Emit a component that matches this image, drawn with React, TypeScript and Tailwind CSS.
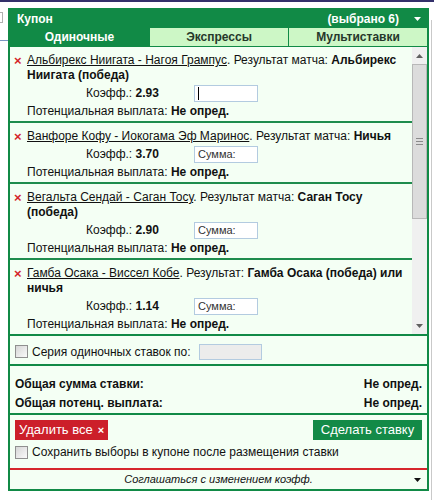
import React from 'react';

interface Selection {
  id: number;
  match: string;
  label: string;
  outcome: string;
  odds: string;
  focused?: boolean;
}

const selections: Selection[] = [
  { id: 1, match: 'Альбирекс Ниигата - Нагоя Грампус', label: 'Результат матча:', outcome: 'Альбирекс Ниигата (победа)', odds: '2.93', focused: true },
  { id: 2, match: 'Ванфоре Кофу - Иокогама Эф Маринос', label: 'Результат матча:', outcome: 'Ничья', odds: '3.70' },
  { id: 3, match: 'Вегальта Сендай - Саган Тосу', label: 'Результат матча:', outcome: 'Саган Тосу (победа)', odds: '2.90' },
  { id: 4, match: 'Гамба Осака - Виссел Кобе', label: 'Результат:', outcome: 'Гамба Осака (победа) или ничья', odds: '1.14' },
];

const Checkbox = () => (
  <span className="block h-[13px] w-[13px] shrink-0 border border-[#8f8f8f] bg-gradient-to-br from-[#d6d6d6] to-[#fafafa]" />
);

const Arrow = ({ up, color }: { up?: boolean; color: string }) => (
  <svg width="7" height="4" viewBox="0 0 7 4">
    <path d={up ? 'M0 4 L3.5 0 L7 4 Z' : 'M0 0 L7 0 L3.5 4 Z'} fill={color} />
  </svg>
);

export default function App() {
  return (
    <div className="relative h-[500px] w-[434px] overflow-hidden bg-white font-['Liberation_Sans',Arial,sans-serif] text-[12px] text-[#111]">
      {/* page fragments around the coupon */}
      <div className="absolute left-0 top-0 h-[2px] w-full bg-[#33306a]" />
      <div className="absolute left-[-10px] top-[12px] h-[11px] w-[13px] border border-[#b0b0b0]" />
      <div className="absolute left-0 top-[40px] h-[1px] w-[8px] bg-[#7b95c2]" />
      <div className="absolute right-[2px] top-[20px] h-[480px] w-[1px] bg-[#c9c9c9]" />

      <div className="ml-[8px] mt-[8px] w-[421px] border-2 border-[#118a46] bg-[#f4fff4]">
        {/* Header */}
        <div className="flex h-[17px] items-center bg-[#118a46] pl-[7px] pr-[6px] font-bold text-white">
          <span className="flex-1">Купон</span>
          <span>(выбрано 6)</span>
          <span className="ml-[15px] flex items-center">
            <Arrow color="#ffffff" />
          </span>
        </div>

        {/* Tabs */}
        <div className="flex gap-[1px] bg-[#118a46] pb-[1px] pt-[1px] font-bold">
          <div className="flex h-[18px] w-[139px] items-center justify-center text-white">Одиночные</div>
          <div className="flex h-[18px] w-[138px] items-center justify-center bg-[#cdf7c6] text-[#26382b]">Экспрессы</div>
          <div className="flex h-[18px] flex-1 items-center justify-center bg-[#cdf7c6] text-[#26382b]">Мультиставки</div>
        </div>

        {/* Selections list */}
        <div className="flex h-[289px] border-b-2 border-[#118a46]">
          <div className="flex-1 overflow-hidden">
            {selections.map((s) => (
              <div key={s.id} className="flex border-b-2 border-[#1e8c4d] pb-[3px] pl-[4px] pr-[4px] pt-[6px]">
                <span className="w-[13px] shrink-0 text-[13px] font-bold leading-[15px] text-[#d4252b]">×</span>
                <div className="flex-1">
                  <div className="leading-[15px]">
                    <span className="underline">{s.match}</span>. {s.label}{' '}
                    {s.outcome.split(' ').map((word, i) => (
                      <React.Fragment key={i}>
                        {i > 0 && ' '}
                        <b>{word}</b>
                      </React.Fragment>
                    ))}
                  </div>
                  <div className="mt-[1px] flex h-[18px] items-center">
                    <span className="w-[167px] pl-[59px]">
                      Коэфф.: <b>{s.odds}</b>
                    </span>
                    <div className="flex h-[17px] w-[64px] items-center border border-[#b3cbe0] bg-white pl-[3px] text-[11px] text-[#333]">
                      {s.focused ? <span className="h-[13px] w-[1px] bg-black" /> : 'Сумма:'}
                    </div>
                  </div>
                  <div className="mt-[2px] leading-[14px]">
                    Потенциальная выплата: <b>Не опред.</b>
                  </div>
                </div>
              </div>
            ))}
          </div>

          {/* Scrollbar */}
          <div className="flex w-[15px] flex-col bg-[#f0f0f0]">
            <div className="flex h-[17px] items-center justify-center">
              <Arrow up color="#606060" />
            </div>
            <div className="flex h-[155px] flex-col items-center justify-center gap-[2px] border border-[#b8b8b8] bg-[#dcdcdc]">
              <span className="h-[1px] w-[7px] bg-[#8a8a8a]" />
              <span className="h-[1px] w-[7px] bg-[#8a8a8a]" />
              <span className="h-[1px] w-[7px] bg-[#8a8a8a]" />
            </div>
            <div className="flex-1" />
            <div className="flex h-[17px] items-center justify-center">
              <Arrow color="#606060" />
            </div>
          </div>
        </div>

        {/* Series */}
        <div className="flex h-[30px] items-center border-b-2 border-[#118a46] px-[5px] pt-[3px]">
          <Checkbox />
          <span className="ml-[4px] w-[167px]">Серия одиночных ставок по:</span>
          <div className="h-[16px] w-[63px] border border-[#b3cbe0] bg-[#ececec]" />
        </div>

        {/* Totals */}
        <div className="border-b-2 border-[#118a46] px-[5px] pt-[9px] font-bold leading-[19px]">
          <div className="flex justify-between">
            <span>Общая сумма ставки:</span>
            <span>Не опред.</span>
          </div>
          <div className="flex justify-between">
            <span>Общая потенц. выплата:</span>
            <span>Не опред.</span>
          </div>
        </div>

        {/* Actions */}
        <div className="border-b-2 border-[#d6262c] px-[5px] pb-[8px] pt-[5px]">
          <div className="flex justify-between">
            <button className="flex h-[20px] items-center whitespace-nowrap bg-[#cc1f2a] pl-[4px] pr-[4px] text-[13px] text-white">
              Удалить все<span className="ml-[5px] text-[11px] font-bold">×</span>
            </button>
            <button className="flex h-[20px] w-[109px] items-center justify-center whitespace-nowrap bg-[#138a47] text-[13px] text-white">
              Сделать ставку
            </button>
          </div>
          <div className="mt-[4px] flex h-[16px] items-center">
            <Checkbox />
            <span className="ml-[4px]">Сохранить выборы в купоне после размещения ставки</span>
          </div>
        </div>

        {/* Footer */}
        <div className="grid h-[19px] grid-cols-[1fr_auto_1fr] items-center">
          <span />
          <span className="text-[11px] italic">Соглашаться с изменением коэфф.</span>
          <span className="flex justify-end pr-[6px]">
            <Arrow color="#111111" />
          </span>
        </div>
      </div>
    </div>
  );
}
